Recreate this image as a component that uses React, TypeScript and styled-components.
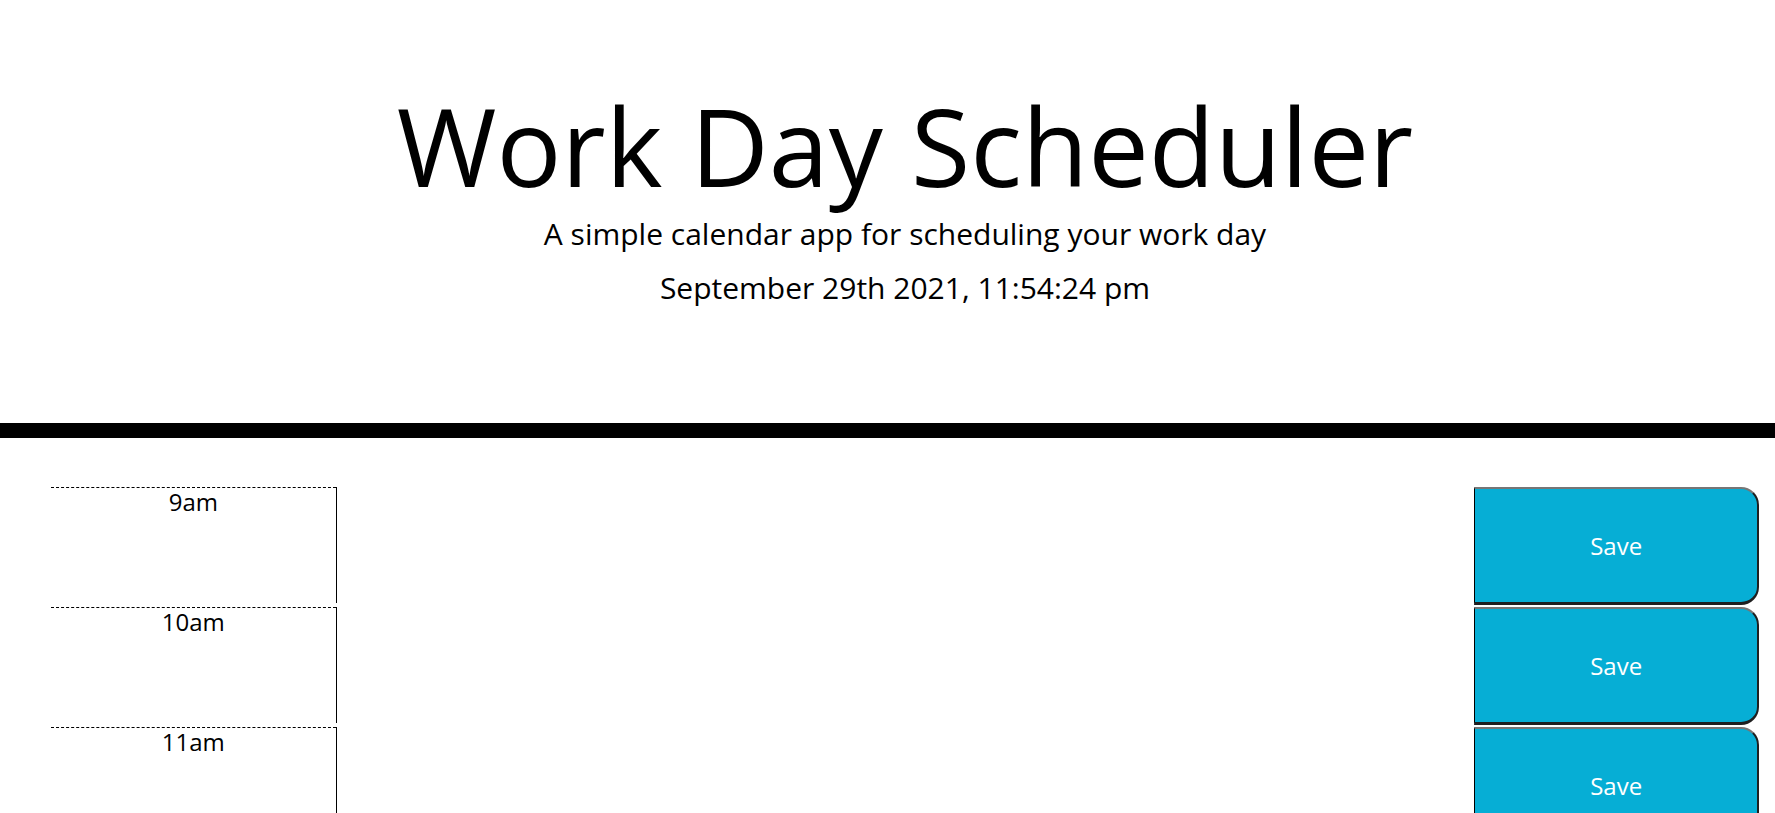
import React from "react";
import styled, { createGlobalStyle } from "styled-components";

const GlobalStyle = createGlobalStyle`
  body {
    margin: 0;
    background-color: #ffffff;
    font-family: "Open Sans", "Liberation Sans", sans-serif;
    color: #000000;
    line-height: 1;
  }
`;

const Header = styled.header`
  text-align: center;
  padding: 81px 16px 0 51px;
  height: 342px;
  border-bottom: 15px solid #000000;
`;

const Title = styled.h1`
  margin: 0;
  font-weight: 400;
  font-size: 108px;
  line-height: 1.2;
`;

const Lead = styled.p`
  margin: 0;
  font-size: 30px;
  font-weight: 400;
  line-height: 1.5;
`;

const CurrentDay = styled.p`
  margin: 9px 0 0;
  font-size: 30px;
  line-height: 1.5;
`;

const Planner = styled.div`
  padding: 49px 16px 0 51px;
`;

const Row = styled.div`
  display: grid;
  grid-template-columns: 2fr 8fr 2fr;
  align-items: start;
  height: 120px;
`;

const Hour = styled.div`
  height: 120px;
  box-sizing: border-box;
  border-top: 1px dashed #000000;
  text-align: center;
  font-size: 24px;
  line-height: 1.2;
`;

const Description = styled.textarea`
  height: 116px;
  box-sizing: border-box;
  background: transparent;
  border: none;
  border-left: 1.5px solid #000000;
  resize: none;
  padding: 10px;
  margin: 0;
  font-family: inherit;
  font-size: 24px;
  outline: none;
`;

const SaveButton = styled.button`
  height: 118px;
  box-sizing: border-box;
  background-color: #06aed5;
  color: #ffffff;
  font-family: inherit;
  font-size: 24px;
  border-top: 2px solid #767676;
  border-left: 1px solid #000000;
  border-right: 2px solid #1f1f1f;
  border-bottom: 3px solid #1f1f1f;
  border-radius: 0 18px 18px 0;
  cursor: pointer;
`;

const hours = ["9am", "10am", "11am", "12pm", "1pm", "2pm", "3pm", "4pm", "5pm"];

export default function App() {
  return (
    <>
      <GlobalStyle />
      <Header>
        <Title>Work Day Scheduler</Title>
        <Lead>A simple calendar app for scheduling your work day</Lead>
        <CurrentDay>September 29th 2021, 11:54:24 pm</CurrentDay>
      </Header>
      <Planner>
        {hours.map((h) => (
          <Row key={h}>
            <Hour>{h}</Hour>
            <Description />
            <SaveButton>Save</SaveButton>
          </Row>
        ))}
      </Planner>
    </>
  );
}
